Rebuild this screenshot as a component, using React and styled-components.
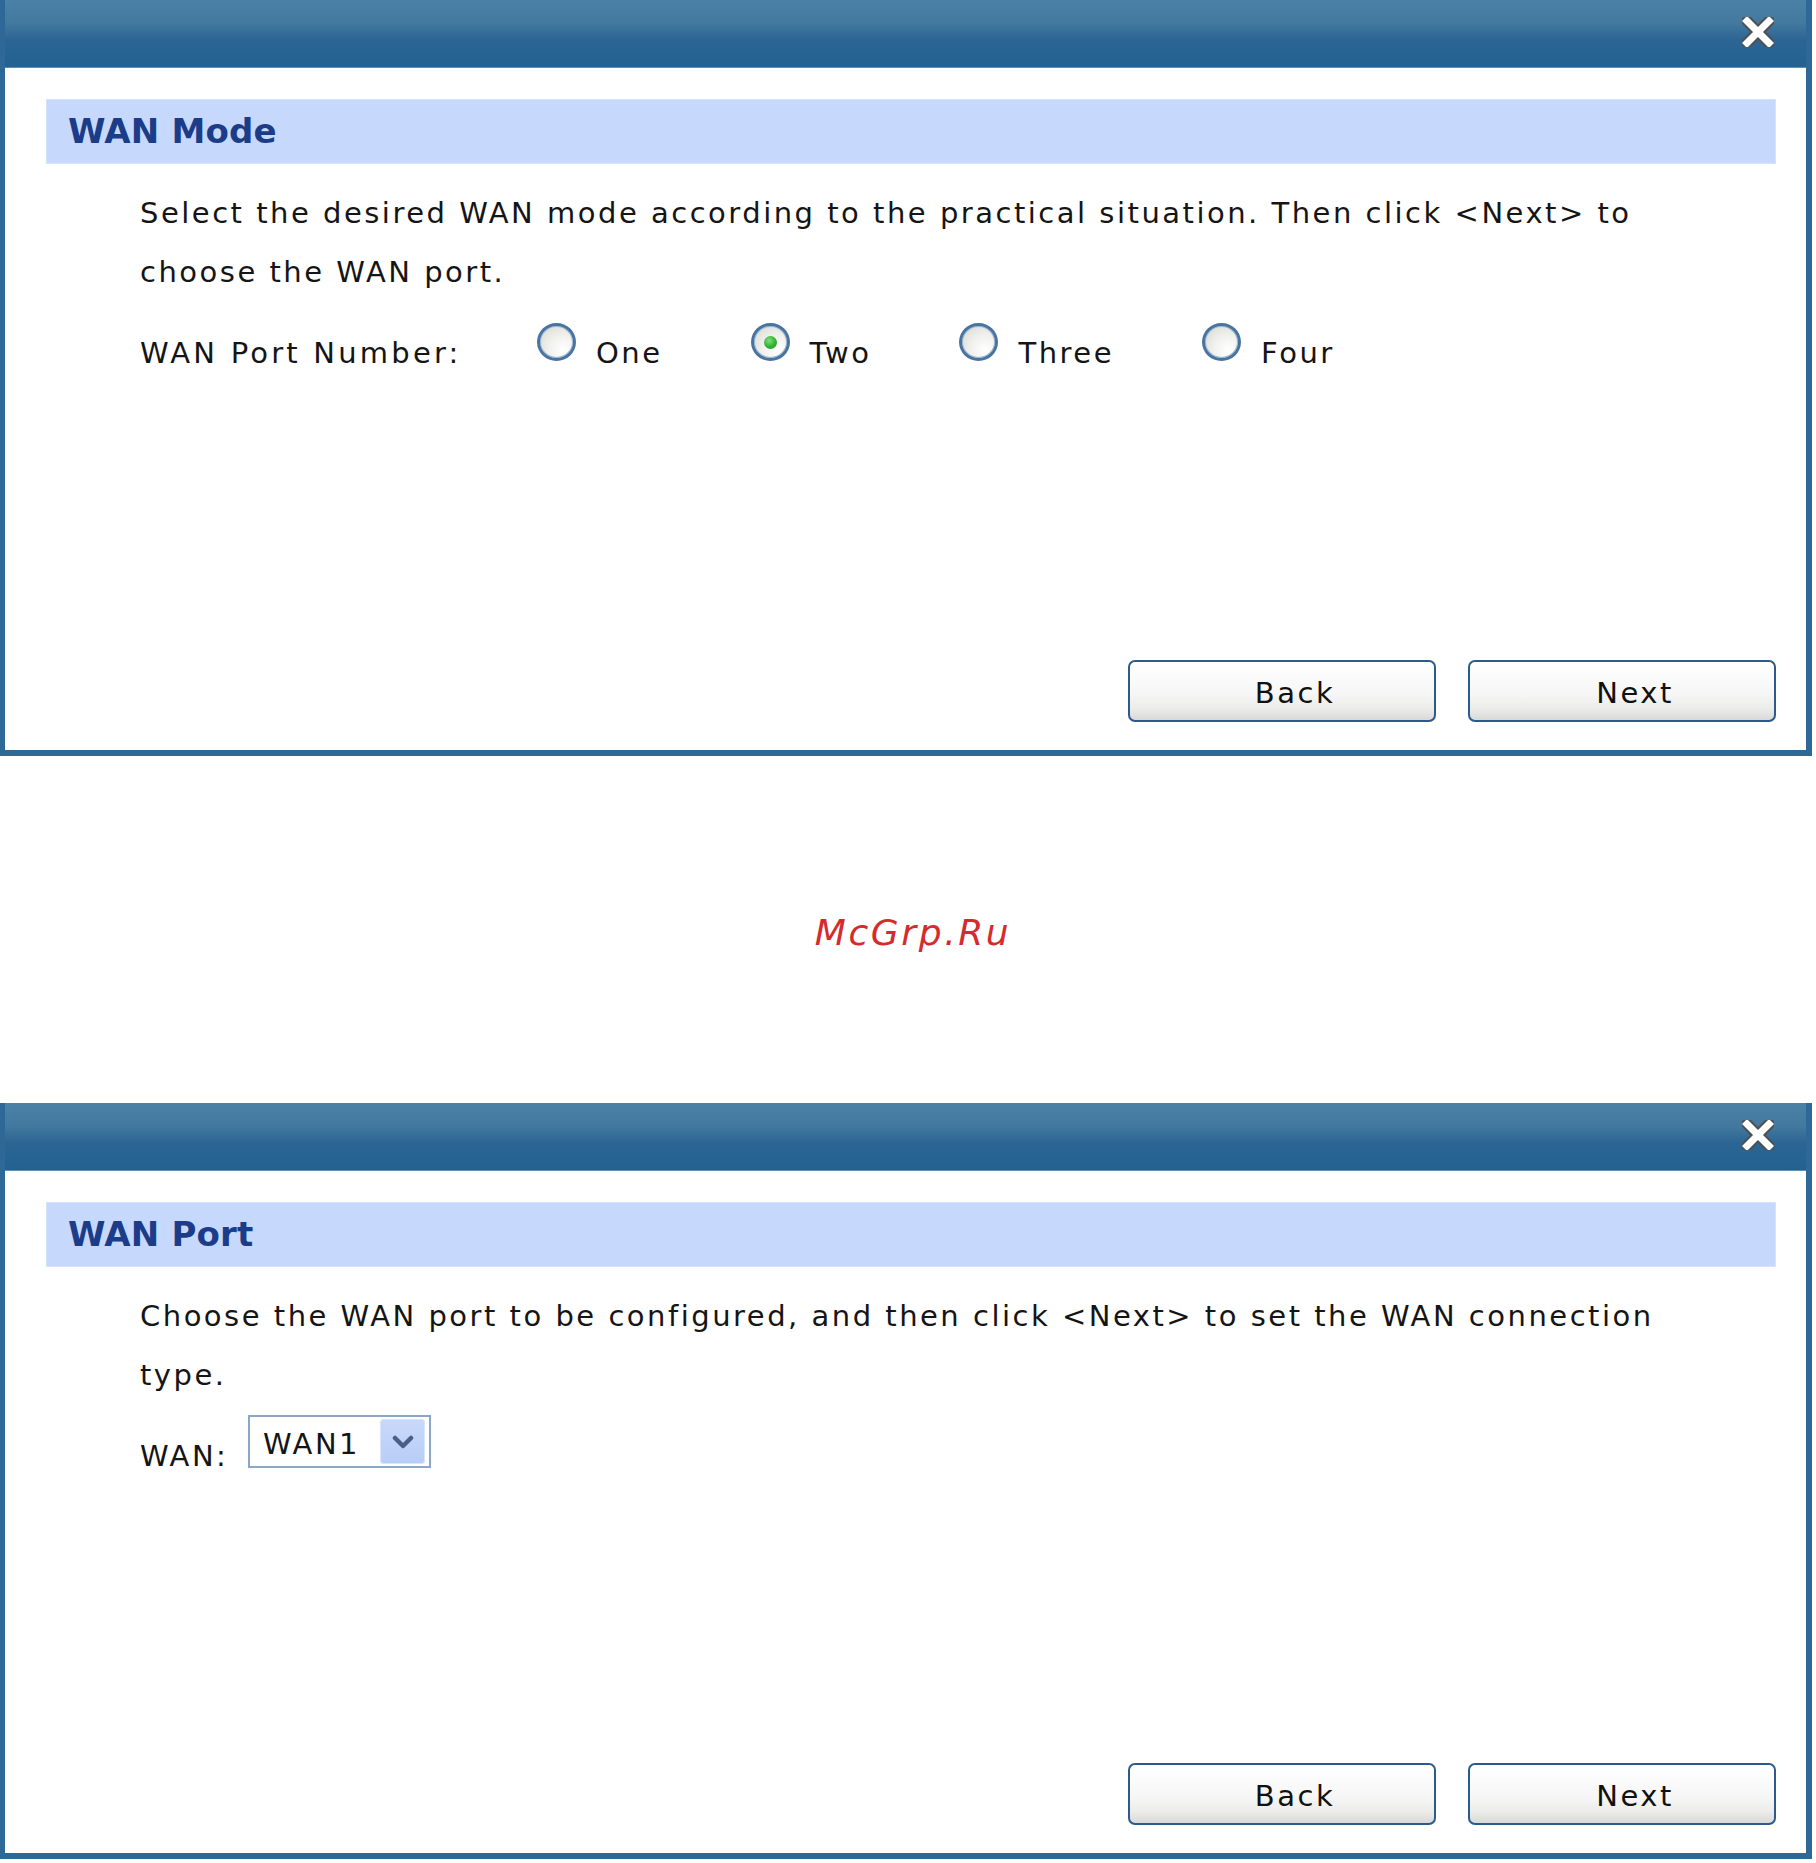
import React from 'react'
import styled, { createGlobalStyle } from 'styled-components'

const GlobalStyle = createGlobalStyle`
  html, body {
    margin: 0;
    padding: 0;
    background: #ffffff;
  }
  body {
    font-family: "DejaVu Sans", Verdana, sans-serif;
    color: #151515;
  }
  * {
    box-sizing: border-box;
  }
`

const CloseIcon = () => (
  <svg width="32" height="30" viewBox="0 0 32 30">
    <path d="M5 4 L27 26 M27 4 L5 26" stroke="#505050" strokeWidth="11" strokeLinecap="round" />
    <path d="M5 4 L27 26 M27 4 L5 26" stroke="#ffffff" strokeWidth="7" strokeLinecap="square" />
  </svg>
)

const ChevronIcon = () => (
  <svg width="22" height="14" viewBox="0 0 22 14">
    <path d="M3 3 L11 11 L19 3" fill="none" stroke="#4a5e86" strokeWidth="4.5" strokeLinecap="round" strokeLinejoin="round" />
  </svg>
)

const Dialog = ({ title, lines, children }) => {
  return (
    <Frame>
      <TitleBar>
        <CloseButton aria-label="Close">
          <CloseIcon />
        </CloseButton>
      </TitleBar>
      <Body>
        <SectionTitle>{title}</SectionTitle>
        <Content>
          <Para>
            {lines.map((line) => (
              <Line key={line}>{line}</Line>
            ))}
          </Para>
          {children}
        </Content>
        <Footer>
          <Button>Back</Button>
          <Button>Next</Button>
        </Footer>
      </Body>
    </Frame>
  )
}

const portOptions = ['One', 'Two', 'Three', 'Four']

const App = () => {
  return (
    <Page>
      <GlobalStyle />
      <Dialog
        title="WAN Mode"
        lines={[
          'Select the desired WAN mode according to the practical situation. Then click <Next> to',
          'choose the WAN port.',
        ]}
      >
        <Row>
          <Label $width="397px" $spacing="3.2px">WAN Port Number:</Label>
          <Options>
            {portOptions.map((item) => (
              <Option key={item}>
                <Radio $checked={item === 'Two'} />
                <OptionText>{item}</OptionText>
              </Option>
            ))}
          </Options>
        </Row>
      </Dialog>

      <Watermark>McGrp.Ru</Watermark>

      <Dialog
        title="WAN Port"
        lines={[
          'Choose the WAN port to be configured, and then click <Next> to set the WAN connection',
          'type.',
        ]}
      >
        <Row>
          <Label $width="108px">WAN:</Label>
          <Select>
            <SelectValue>WAN1</SelectValue>
            <SelectArrow>
              <ChevronIcon />
            </SelectArrow>
          </Select>
        </Row>
      </Dialog>
    </Page>
  )
}

export default App

const Page = styled.div`
  width: 1816px;
  display: flex;
  flex-direction: column;
`

const Frame = styled.div`
  width: 1812px;
  border-style: solid;
  border-color: #2d6896;
  border-width: 0 6px 6px 5px;
  background: #ffffff;
`

const TitleBar = styled.div`
  height: 68px;
  display: flex;
  justify-content: flex-end;
  align-items: flex-start;
  padding: 17px 32px 0 0;
  background: linear-gradient(
    180deg,
    #4c81a7 0%,
    #44799f 34%,
    #2b6594 60%,
    #236191 100%
  );
  border-bottom: 1px solid #5f8fb4;
`

const CloseButton = styled.div`
  width: 32px;
  height: 30px;
  display: flex;
`

const Body = styled.div`
  height: 682px;
  display: flex;
  flex-direction: column;
  padding: 31px 30px 28px 41px;
`

const SectionTitle = styled.div`
  height: 65px;
  line-height: 65px;
  padding-left: 22px;
  background: #c6d9fd;
  box-shadow: inset 0 0 0 1px #d6e3fd;
  color: #1b3c88;
  font-size: 34px;
  font-weight: 700;
  letter-spacing: 0.2px;
`

const Content = styled.div`
  padding-left: 94px;
  font-size: 29px;
  letter-spacing: 2.5px;
`

const Para = styled.div`
  margin-top: 20px;
  line-height: 59px;
`

const Line = styled.div`
  white-space: nowrap;
`

const Row = styled.div`
  display: flex;
  align-items: flex-start;
  margin-top: 10px;
`

const Label = styled.div`
  width: ${(props) => props.$width};
  flex-shrink: 0;
  margin-top: 12px;
  line-height: 59px;
  letter-spacing: ${(props) => props.$spacing || '2.5px'};
`

const Options = styled.div`
  display: flex;
  gap: 88px;
  margin-top: 10px;
`

const Option = styled.div`
  display: flex;
  align-items: flex-start;
  gap: 20px;
`

const Radio = styled.span`
  position: relative;
  width: 39px;
  height: 38px;
  margin-top: 1px;
  border-radius: 50%;
  border: 3px solid #4874a2;
  background: radial-gradient(circle at 70% 75%, #ffffff 0%, #f2f2ef 40%, #d6d6d0 100%);
  box-shadow: inset 0 0 0 1px #9fb8d2;

  &::after {
    content: '';
    display: ${(props) => (props.$checked ? 'block' : 'none')};
    position: absolute;
    left: 50%;
    top: 50%;
    width: 13px;
    height: 13px;
    margin: -6.5px 0 0 -6.5px;
    border-radius: 50%;
    background: radial-gradient(circle at 40% 35%, #7ee07a 0%, #2fb22f 55%, #1f8f22 100%);
  }
`

const OptionText = styled.span`
  margin-top: 2px;
  line-height: 59px;
`

const Select = styled.div`
  width: 183px;
  height: 53px;
  display: flex;
  align-items: center;
  justify-content: space-between;
  padding: 0 4px 0 13px;
  border: 2px solid #8aa7c6;
  background: #ffffff;
`

const SelectValue = styled.span`
  padding-top: 6px;
  line-height: 1;
`

const SelectArrow = styled.span`
  width: 45px;
  height: 45px;
  display: flex;
  align-items: center;
  justify-content: center;
  border-radius: 4px;
  background: linear-gradient(180deg, #c9d9fb 0%, #b8cdf6 100%);
  box-shadow: inset 0 0 0 1px #d9e5fc;
`

const Footer = styled.div`
  margin-top: auto;
  display: flex;
  justify-content: flex-end;
  gap: 32px;
`

const Button = styled.button`
  width: 308px;
  height: 62px;
  padding: 4px 0 0 26px;
  border: 2px solid #2c5a8c;
  border-radius: 7px;
  background: linear-gradient(180deg, #ffffff 0%, #f6f6f6 55%, #ececea 80%, #d9d9d9 100%);
  font-family: "DejaVu Sans", Verdana, sans-serif;
  font-size: 29px;
  letter-spacing: 2.5px;
  color: #111111;
`

const Watermark = styled.div`
  height: 347px;
  display: flex;
  align-items: center;
  justify-content: center;
  padding: 6px 0 0 10px;
  color: #d62b2b;
  font-size: 36px;
  font-style: italic;
  letter-spacing: 2.6px;
`
